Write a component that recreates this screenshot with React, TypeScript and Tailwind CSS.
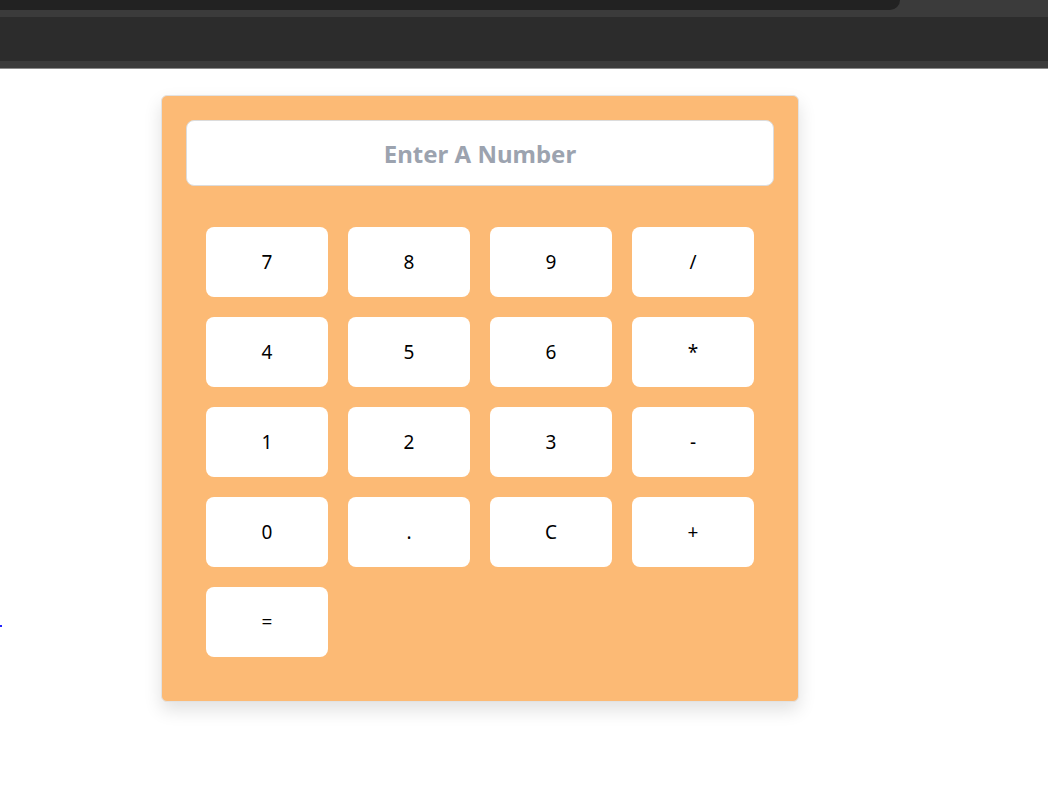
import React from "react";

const keys = ["7", "8", "9", "/", "4", "5", "6", "*", "1", "2", "3", "-", "0", ".", "C", "+", "="];

export default function App() {
  return (
    <div className="min-h-[788px] bg-white" style={{ fontFamily: '"Noto Sans", "Open Sans", sans-serif' }}>
      <div className="flex h-[10px] bg-[#3b3b3b]">
        <div className="w-[900px] rounded-br-[10px] bg-[#222222]" />
      </div>
      <div className="h-[7px] bg-[#3b3b3b]" />
      <div className="h-[44px] bg-[#2c2c2c]" />
      <div className="h-[7px] bg-[#3b3b3b]" />
      <div className="h-[1px] bg-[#8a8a8a]" />
      <div className="flex items-start">
        <div className="w-[161px] pt-[556px]">
          <div className="h-[2px] w-[2px] bg-[#2222ff]" />
        </div>
        <div className="mt-[26px] w-[638px] rounded-md border border-[#e2e2e2] bg-[#fcba75] p-[24px] shadow-[0_8px_18px_rgba(0,0,0,0.12)]">
          <input
            placeholder="Enter A Number"
            className="block h-[66px] w-full rounded-lg border border-[#dcdcdc] bg-white text-center text-[24px] font-bold text-gray-700 placeholder:text-[#9ca3af] outline-none"
          />
          <div className="mt-[21px] grid grid-cols-4 gap-[20px] p-[20px]">
            {keys.map((k) => (
              <button
                key={k}
                className="flex h-[70px] items-center justify-center rounded-lg bg-white text-[19px] text-black"
              >
                {k}
              </button>
            ))}
          </div>
        </div>
      </div>
    </div>
  );
}
